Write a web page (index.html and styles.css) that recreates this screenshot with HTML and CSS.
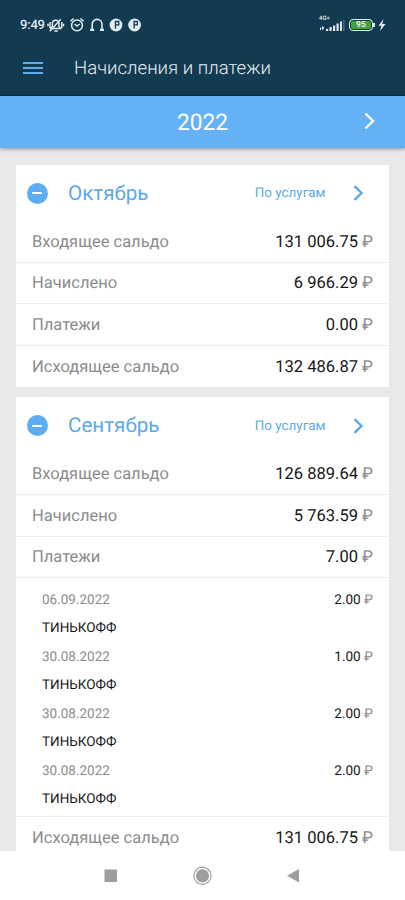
FILE: index.html
```
<!DOCTYPE html>
<html lang="ru">
<head>
<meta charset="utf-8">
<title>Начисления и платежи</title>
<link rel="stylesheet" href="styles.css">
</head>
<body>
<div class="app">
  <header class="header">
    <div class="status">
      <span class="clock">9:49</span>
      <svg class="notices" width="96" height="18" viewBox="0 0 96 18" fill="none" stroke="#e1eaf0" stroke-width="1.5">
        <path d="M5 12.500h8.500l-1.500-2V7.500a3.300 3.300 0 0 0-6.600 0v3L4 12.500zM7.300 15h3.500M2.800 15.300L13.800 3.200M3 6v6M1 7.800v2.500M14.800 6v6M16.500 7.800v2.500"/>
        <circle cx="30" cy="9.400" r="5.400"/><path d="M23.400 5.300l3.200-2.800M36.600 5.300l-3.200-2.800M27.500 8l2.500 2 2.700-2"/>
        <path d="M45.200 13.600V8.300a4.900 4.900 0 0 1 9.800 0v5.300" stroke-width="1.600"/><path d="M43.200 13.800h4M53 13.800h4" stroke-width="2.200"/>
        <g fill="#e1eaf0" stroke="none"><circle cx="69" cy="9" r="6.400"/><circle cx="87.600" cy="9" r="6.400"/></g>
        <path d="M68.500 12.500V5.500h3.300v3.300h-3.300M87.100 12.500V5.500h3.300v3.300h-3.300" stroke="#123a50" stroke-width="1.300"/>
      </svg>
      <div class="signal">
        <span class="network">4G+</span>
        <svg width="26" height="14" viewBox="0 0 26 14" fill="#e1eaf0"><path d="M1 9.500h1.200V12H1zM3 8l2.500 2L3 12zM7 11h2.200v2H7zM10.500 9h2.200v4h-2.200zM14 7.500h2.200V13H14zM17.500 5.500h2.200V13h-2.200zM21 3.500h2V13h-2z"/><path d="M24.200 2h1.300v11h-1.300z" opacity=".35"/></svg>
      </div>
      <div class="battery">95</div>
      <svg class="bolt" width="8" height="12" viewBox="0 0 8 12" fill="#e1eaf0"><path d="M5.500 0L.5 6.800h2.800L2.200 12l5.300-7H4.300z"/></svg>
    </div>
    <div class="toolbar">
      <div class="menu"><i></i><i></i><i></i></div>
      <h1 class="title">Начисления и платежи</h1>
    </div>
  </header>
  <div class="year">
    <span class="year-label">2022</span>
    <svg class="year-next" width="12" height="18" viewBox="0 0 12 18" fill="none" stroke="#fff" stroke-width="2.400"><path d="M1.500 1.500L9 9l-7.500 7.500"/></svg>
  </div>
  <main class="content">
    <section class="card">
      <div class="card-head">
        <span class="collapse"></span><h2 class="month">Октябрь</h2><span class="services">По услугам</span>
        <svg class="next" width="11" height="16" viewBox="0 0 11 16" fill="none" stroke="#5baae8" stroke-width="2.400"><path d="M1.500 1.200L8.500 8l-7 6.800"/></svg>
      </div>
      <div class="row"><span>Входящее сальдо</span><b>131 006.75 <em>₽</em></b></div>
      <div class="row"><span>Начислено</span><b>6 966.29 <em>₽</em></b></div>
      <div class="row"><span>Платежи</span><b>0.00 <em>₽</em></b></div>
      <div class="row"><span>Исходящее сальдо</span><b>132 486.87 <em>₽</em></b></div>
    </section>
    <section class="card">
      <div class="card-head">
        <span class="collapse"></span><h2 class="month">Сентябрь</h2><span class="services">По услугам</span>
        <svg class="next" width="11" height="16" viewBox="0 0 11 16" fill="none" stroke="#5baae8" stroke-width="2.400"><path d="M1.500 1.200L8.500 8l-7 6.800"/></svg>
      </div>
      <div class="row"><span>Входящее сальдо</span><b>126 889.64 <em>₽</em></b></div>
      <div class="row"><span>Начислено</span><b>5 763.59 <em>₽</em></b></div>
      <div class="row"><span>Платежи</span><b>7.00 <em>₽</em></b></div>
      <div class="payments">
        <div class="payment"><span>06.09.2022</span><b>2.00 <em>₽</em></b></div><p class="payer">ТИНЬКОФФ</p>
        <div class="payment"><span>30.08.2022</span><b>1.00 <em>₽</em></b></div><p class="payer">ТИНЬКОФФ</p>
        <div class="payment"><span>30.08.2022</span><b>2.00 <em>₽</em></b></div><p class="payer">ТИНЬКОФФ</p>
        <div class="payment"><span>30.08.2022</span><b>2.00 <em>₽</em></b></div><p class="payer">ТИНЬКОФФ</p>
      </div>
      <div class="row"><span>Исходящее сальдо</span><b>131 006.75 <em>₽</em></b></div>
    </section>
  </main>
  <nav class="nav">
    <svg width="405" height="49" viewBox="0 0 405 49" fill="#9d9d9d"><path d="M104.500 18.500h12.500v12.500h-12.500zM299 18v13.600l-12-6.800z"/><circle cx="202.500" cy="24.800" r="6.600"/><circle cx="202.500" cy="24.800" r="8.600" fill="none" stroke="#9d9d9d" stroke-width="1.200"/></svg>
  </nav>
</div>
</body>
</html>
```
FILE: styles.css
```
* { box-sizing: border-box; }
body { margin: 0; font-family: Roboto, "Noto Sans", sans-serif; background: #fff; text-rendering: geometricPrecision; }
h1, h2, p { margin: 0; font-weight: 400; }
b, em { font-weight: 400; font-style: normal; }
svg { display: block; flex: none; }
.app { width: 405px; height: 900px; display: flex; flex-direction: column; overflow: hidden; }
.header { height: 96px; flex: none; background: #123a50; border-bottom: 1px solid #0b2c44; }
.status { height: 46px; padding: 4px 20px 0; display: flex; align-items: center; color: #e1eaf0; }
.clock { width: 27px; font-size: 13px; font-weight: 500; white-space: nowrap; letter-spacing: -.2px; }
.signal { margin-left: auto; width: 26px; height: 14px; margin-top: 0; position: relative; }
.network { position: absolute; left: 0; top: -3px; font-size: 6px; line-height: 7px; font-weight: 500; }
.battery { position: relative; width: 24px; height: 12px; margin-left: 4px; border: 1.500px solid #e1eaf0; border-radius: 4px; background: #43a52c; box-shadow: inset 0 0 0 1px #123a50; color: #e1eaf0; font-size: 8.500px; line-height: 10.500px; font-weight: 700; text-align: center; }
.battery::after { content: ""; position: absolute; right: -3px; top: 3px; width: 2px; height: 4px; background: #e1eaf0; }
.bolt { margin-left: 5px; margin-right: -1px; }
.toolbar { height: 43px; display: flex; align-items: center; padding-left: 23px; }
.menu { width: 20px; display: grid; gap: 3px; }
.menu i { height: 2px; background: #62aaeb; }
.title { margin-left: 31px; font-size: 18.600px; font-weight: 300; color: #e6edf2; white-space: nowrap; }
.year { height: 52px; flex: none; position: relative; z-index: 1; display: flex; align-items: center; justify-content: center; background: #65b1f5; color: #fff; box-shadow: 0 1px 4px rgba(0,0,0,.4); }
.year-label { font-size: 22.800px; }
.year-next { position: absolute; right: 29px; top: 16px; }
.content { height: 703px; flex: none; background: #e9e9e9; padding: 16.500px 16px 0; display: flex; flex-direction: column; gap: 10px; overflow: hidden; }
.card { flex: none; background: #fff; }
.card-head { height: 56.500px; padding: 1px 25.500px 0 10.500px; display: flex; align-items: center; color: #5baae8; }
.collapse { width: 21px; height: 21px; border-radius: 50%; background: #5fadf1; display: grid; place-items: center; }
.collapse::after { content: ""; width: 10px; height: 2px; background: #fff; }
.month { margin-left: 20.500px; padding-top: 1px; font-size: 20.600px; }
.services { margin-left: auto; padding-top: 1px; font-size: 13.400px; }
.next { margin-left: 27px; }
.row { height: 41.500px; padding: 2px 16px 0; display: flex; align-items: center; justify-content: space-between; font-size: 16.500px; color: #8c8c8c; border-bottom: 1px solid #eee; }
.row:last-child { padding-top: 1.500px; border-bottom: 0; }
.row b { color: #161616; }
.row em, .payment em { color: #8c8c8c; }
.payments { height: 239px; padding: 8px 16px 0 26px; border-bottom: 1px solid #eee; }
.payment { height: 28.500px; display: flex; align-items: center; justify-content: space-between; font-size: 13.500px; color: #8c8c8c; }
.payment b { color: #161616; }
.payer { height: 28.500px; line-height: 27.500px; font-size: 13.500px; color: #161616; }
.nav { height: 49px; flex: none; background: #fff; }
```
